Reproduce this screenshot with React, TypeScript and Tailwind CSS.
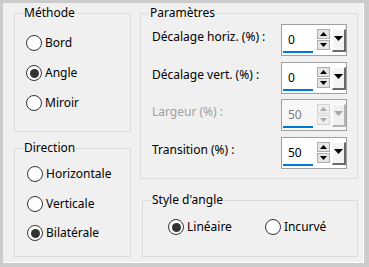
import React from 'react'

function Radio({ label, checked }: { label: string; checked?: boolean }) {
  return (
    <div className="flex items-center gap-[3px] h-[20px]">
      <span className="w-[16px] h-[16px] rounded-full border-[1.5px] border-[#333] bg-white flex items-center justify-center">
        {checked && <span className="w-[9px] h-[9px] rounded-full bg-[#333]" />}
      </span>
      <span>{label}</span>
    </div>
  )
}

function Arrow({ up, color, w = 7, h = 4 }: { up?: boolean; color: string; w?: number; h?: number }) {
  return (
    <svg width={w} height={h} viewBox={`0 0 ${w} ${h}`}>
      {up ? (
        <polygon points={`0,${h} ${w},${h} ${w / 2},0`} fill={color} />
      ) : (
        <polygon points={`0,0 ${w},0 ${w / 2},${h}`} fill={color} />
      )}
    </svg>
  )
}

function SpinBox({ value, disabled }: { value: string; disabled?: boolean }) {
  const tri = disabled ? '#a8a8a8' : '#000'
  const btn = disabled ? 'border-[#d4d4d4] bg-[#f0f0f0]' : 'border-[#adadad] bg-[#e5e5e5]'
  return (
    <div
      className={`w-[66px] h-[32px] border border-[#a0a0a0] flex items-start ${
        disabled ? 'bg-[#f7f7f7]' : 'bg-white'
      }`}
    >
      {/* text field */}
      <div className="w-[34px] h-full flex flex-col pl-[1px]">
        <div className={`flex-1 pl-[5px] pt-[7px] ${disabled ? 'text-[#7a7a7a]' : 'text-black'}`}>{value}</div>
        <div className="h-[2px] w-[30px] bg-[#0078d7] mb-[2px]" />
      </div>
      {/* up / down */}
      <div className="flex flex-col gap-[1px] pt-[4px] ml-[1px]">
        <div className={`w-[13px] h-[10px] border flex items-center justify-center ${btn}`}>
          <Arrow up color={tri} />
        </div>
        <div className={`w-[13px] h-[10px] border flex items-center justify-center ${btn}`}>
          <Arrow color={tri} />
        </div>
      </div>
      {/* dropdown */}
      <div
        className={`mt-[4px] ml-[2px] w-[14px] h-[23px] border-l border-t border-r-2 border-b-2 flex justify-center pt-[6px] ${
          disabled
            ? 'border-l-white border-t-white border-r-[#b4b4b4] border-b-[#b4b4b4] bg-[#f0f0f0]'
            : 'border-l-white border-t-white border-r-[#696969] border-b-[#696969] bg-[#f4f4f4]'
        }`}
      >
        <Arrow color={tri} w={9} h={5} />
      </div>
    </div>
  )
}

function Field({ label, value, disabled }: { label: string; value: string; disabled?: boolean }) {
  return (
    <div className="flex items-center justify-between h-[32px]">
      <span className={`mb-[6px] ${disabled ? 'text-[#a0a0a0]' : 'text-black'}`}>{label}</span>
      <SpinBox value={value} disabled={disabled} />
    </div>
  )
}

export default function App() {
  return (
    <div className="w-[369px] h-[267px] bg-[#cbcbcb] pl-[3px] pt-[3px] pr-[5px] pb-[4px] font-['Noto_Sans',sans-serif] text-[12px] leading-[16px] text-black">
      <div className="w-full h-full bg-[#f0f0f0] border-r border-b border-white flex gap-[9px] pl-[11px] pt-[2px]">
        {/* left column */}
        <div className="w-[117px] flex flex-col">
          <fieldset className="border border-[#dcdcdc]">
            <legend className="ml-[8px] px-[1px]">Méthode</legend>
            <div className="flex flex-col gap-[10px] pl-[11px] pt-[12px] pb-[18px]">
              <Radio label="Bord" />
              <Radio label="Angle" checked />
              <Radio label="Miroir" />
            </div>
          </fieldset>
          <fieldset className="mt-[8px] border border-[#dcdcdc]">
            <legend className="ml-[8px] px-[1px]">Direction</legend>
            <div className="flex flex-col gap-[9.5px] pl-[12px] pt-[8px] pb-[13px]">
              <Radio label="Horizontale" />
              <Radio label="Verticale" />
              <Radio label="Bilatérale" checked />
            </div>
          </fieldset>
        </div>

        {/* right column */}
        <div className="w-[218px] flex flex-col">
          <fieldset className="border border-[#dcdcdc]">
            <legend className="ml-[8px] px-[1px]">Paramètres</legend>
            <div className="flex flex-col gap-[5.5px] pl-[11px] pr-[10px] pt-[3px] pb-[9.5px]">
              <Field label="Décalage horiz. (%) :" value="0" />
              <Field label="Décalage vert. (%) :" value="0" />
              <Field label="Largeur (%) :" value="50" disabled />
              <Field label="Transition (%) :" value="50" />
            </div>
          </fieldset>
          <fieldset className="mt-[13px] ml-[2px] border border-[#dcdcdc]">
            <legend className="ml-[8px] px-[1px]">Style d'angle</legend>
            <div className="flex gap-[33px] pl-[25px] pt-[9px] pb-[19px]">
              <Radio label="Linéaire" checked />
              <Radio label="Incurvé" />
            </div>
          </fieldset>
        </div>
      </div>
    </div>
  )
}
